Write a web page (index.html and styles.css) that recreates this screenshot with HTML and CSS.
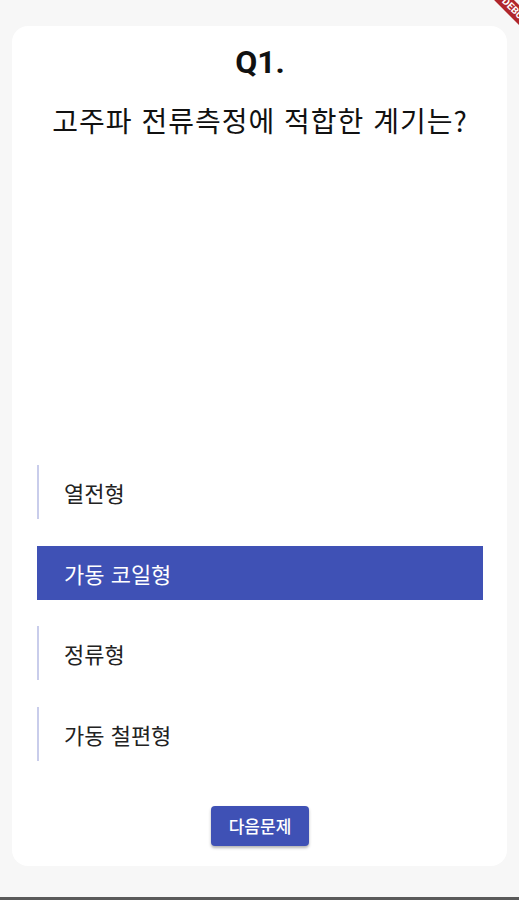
FILE: index.html
```html
<!DOCTYPE html>
<html lang="ko">

<head>
    <meta charset="UTF-8">
    <meta name="viewport" content="width=device-width, initial-scale=1.0">
    <title>Quiz</title>
    <link rel="stylesheet" href="styles.css">
</head>

<body>
    <div class="screen">
        <div class="card">
            <div class="number">Q1.</div>
            <div class="question">고주파 전류측정에 적합한 계기는?</div>

            <div class="options">
                <div class="option">열전형</div>
                <div class="option selected">가동 코일형</div>
                <div class="option">정류형</div>
                <div class="option">가동 철편형</div>
            </div>

            <div class="actions">
                <button class="next">다음문제</button>
            </div>
        </div>
        <div class="banner">DEBUG</div>
    </div>
    <div class="bottom-edge"></div>
</body>

</html>
```

FILE: styles.css
```css
body {
    margin: 0;
    background-color: #f7f7f7;
    font-family: Roboto, "Noto Sans", "Noto Sans CJK KR", sans-serif;
    color: #111;
}

.screen {
    position: relative;
    height: 897px;
    padding: 26px 12px 0 12px;
    box-sizing: border-box;
    overflow: hidden;
}

.card {
    background-color: white;
    border-radius: 16px;
    height: 840px;
    box-sizing: border-box;
    padding: 18px 24px 0 25px;
    display: flex;
    flex-direction: column;
}

.number {
    text-align: center;
    font-size: 32px;
    font-weight: bold;
    line-height: 36px;
}

.question {
    text-align: center;
    font-family: "Noto Sans CJK KR", sans-serif;
    font-size: 28px;
    letter-spacing: 1px;
    line-height: 36px;
    margin-top: 22px;
}

.options {
    margin-top: 327px;
    display: flex;
    flex-direction: column;
    gap: 26.5px;
}

.option {
    height: 54px;
    display: flex;
    align-items: center;
    padding-left: 25px;
    border-left: 2px solid #c9cdeb;
    font-family: "Noto Sans CJK KR", sans-serif;
    font-size: 22px;
    color: #222;
}

.option.selected {
    background-color: #3f51b5;
    border-left-color: #3f51b5;
    color: white;
}

.actions {
    display: flex;
    justify-content: center;
    margin-top: 45px;
}

.next {
    width: 98px;
    height: 40px;
    background-color: #3f51b5;
    color: white;
    border: none;
    border-radius: 4px;
    font-family: "Noto Sans CJK KR", sans-serif;
    font-size: 17px;
    font-weight: 500;
    box-shadow: 0 2px 3px rgba(0, 0, 0, 0.3);
}

.banner {
    position: absolute;
    top: 4px;
    right: -56px;
    width: 120px;
    height: 14px;
    line-height: 14px;
    background-color: #b0262b;
    color: white;
    font-size: 10px;
    font-weight: bold;
    text-align: center;
    transform: rotate(45deg);
}

.bottom-edge {
    height: 3px;
    background-color: #5a5a5a;
}
```
